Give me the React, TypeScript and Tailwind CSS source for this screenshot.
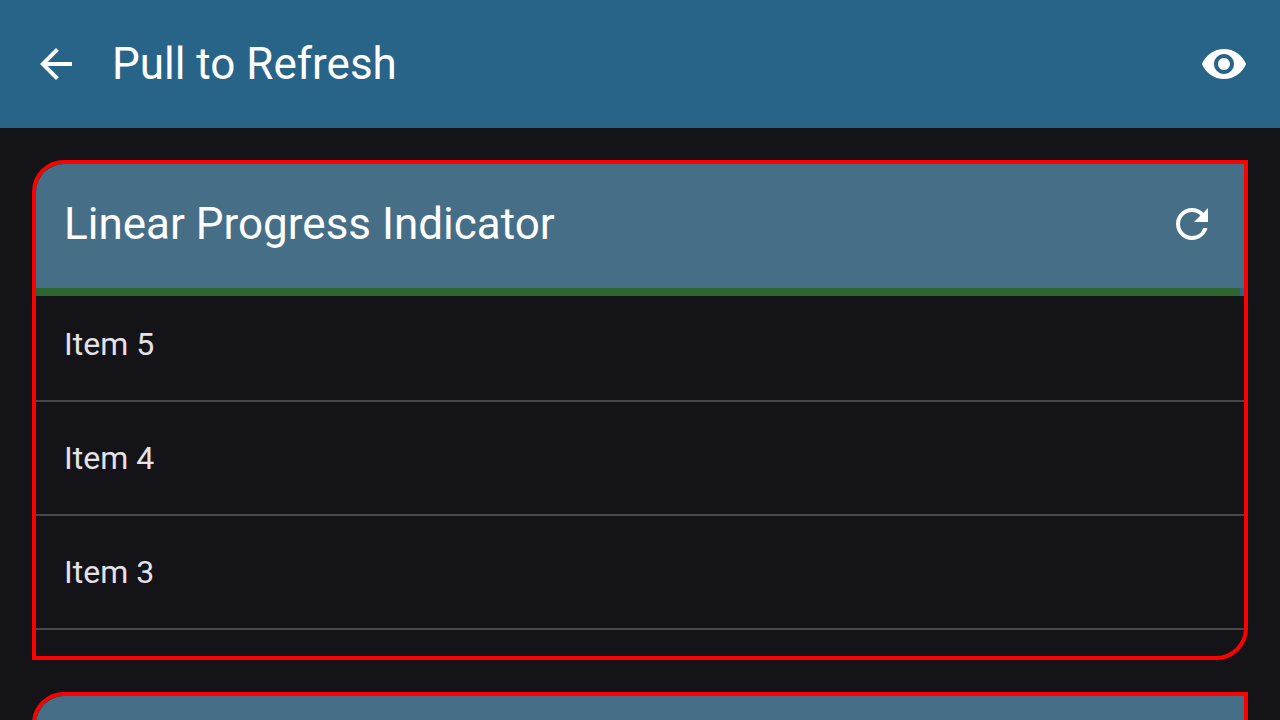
import { MdArrowBack, MdRefresh, MdVisibility } from "react-icons/md";

type RefreshCardProps = { title: string; items: string[] };

function RefreshCard({ title, items }: RefreshCardProps) {
  return (
    <section className="h-[500px] shrink-0 overflow-hidden rounded-tl-[32px] rounded-br-[32px] border-4 border-[#ff0000]">
      <header className="flex h-[124px] items-center justify-between bg-[#466e87] px-7 pb-1 text-white">
        <h2 className="text-[44px] leading-[56px]">{title}</h2>
        <button type="button" aria-label="Refresh">
          <MdRefresh className="size-12" />
        </button>
      </header>
      <div
        role="progressbar"
        aria-label={title}
        className="flex h-2 bg-[#286488] pr-1"
      >
        <div className="flex-1 bg-[#2e662f]" />
      </div>
      <ul className="-mt-2">
        {items.map((item) => (
          <li
            key={item}
            className="flex h-[114px] items-center border-b-2 border-[#48474b] px-7 text-[32px] leading-[48px] text-[#e5e1e6]"
          >
            {item}
          </li>
        ))}
      </ul>
    </section>
  );
}

const items = ["Item 5", "Item 4", "Item 3", "Item 2", "Item 1"];

export default function App() {
  return (
    <div className="flex h-screen flex-col overflow-hidden bg-[#141318] font-['Roboto',sans-serif]">
      <header className="flex h-32 shrink-0 items-center bg-[#286488] px-8 text-white">
        <button type="button" aria-label="Back">
          <MdArrowBack className="size-12" />
        </button>
        <h1 className="ml-8 flex-1 text-[44px] leading-[56px]">
          Pull to Refresh
        </h1>
        <button type="button" aria-label="Toggle visibility">
          <MdVisibility className="size-12" />
        </button>
      </header>
      <main className="flex min-h-0 flex-1 flex-col gap-8 overflow-hidden p-8">
        <RefreshCard title="Linear Progress Indicator" items={items} />
        <RefreshCard title="Circular Progress Indicator" items={items} />
      </main>
    </div>
  );
}
